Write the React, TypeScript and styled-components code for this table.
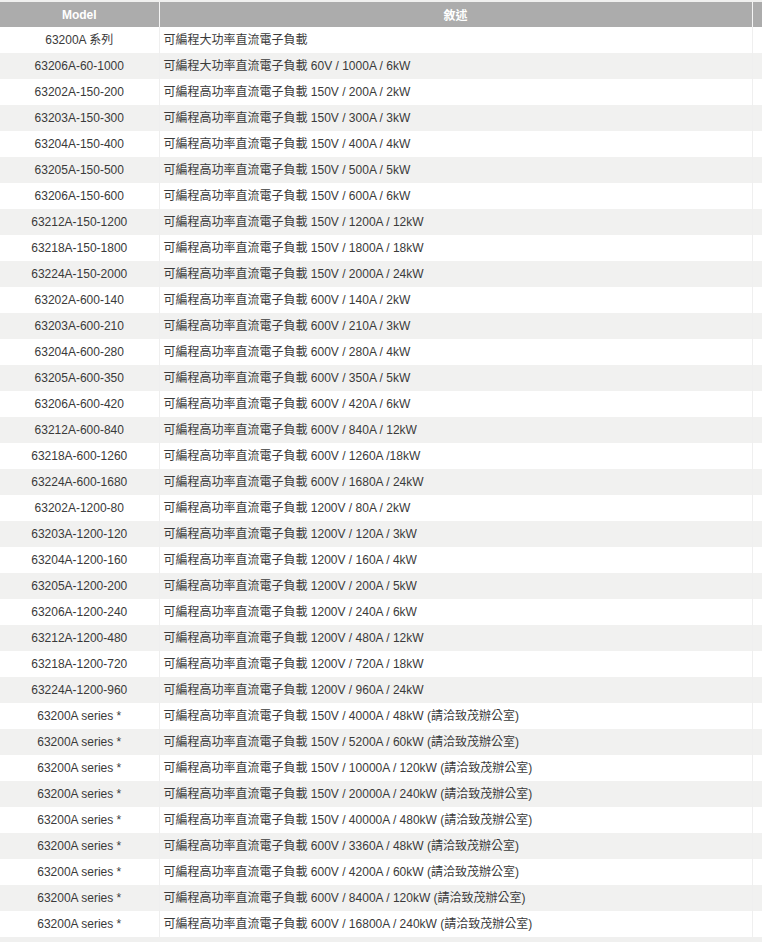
import React from 'react';
import styled, { createGlobalStyle } from 'styled-components';

const GlobalStyle = createGlobalStyle`
  html, body {
    margin: 0;
    padding: 0;
    background: #ffffff;
  }
  body {
    font-family: "Liberation Sans", Arial, "Noto Sans CJK TC", sans-serif;
    font-size: 12px;
    color: #3a3a3a;
  }
`;

interface IRow {
  model: string;
  desc: string;
}

const NOTE = ' (請洽致茂辦公室)';

const range = (
  volt: string,
  items: [string, string, string][],
  family = '高'
): IRow[] =>
  items.map(([model, amp, kw]) => ({
    model,
    desc: `可編程${family}功率直流電子負載 ${volt} / ${amp}${kw}`,
  }));

const rows: IRow[] = [
  { model: '63200A 系列', desc: '可編程大功率直流電子負載' },
  { model: '63206A-60-1000', desc: '可編程大功率直流電子負載 60V / 1000A / 6kW' },
  ...range('150V', [
    ['63202A-150-200', '200A', ' / 2kW'],
    ['63203A-150-300', '300A', ' / 3kW'],
    ['63204A-150-400', '400A', ' / 4kW'],
    ['63205A-150-500', '500A', ' / 5kW'],
    ['63206A-150-600', '600A', ' / 6kW'],
    ['63212A-150-1200', '1200A', ' / 12kW'],
    ['63218A-150-1800', '1800A', ' / 18kW'],
    ['63224A-150-2000', '2000A', ' / 24kW'],
  ]),
  ...range('600V', [
    ['63202A-600-140', '140A', ' / 2kW'],
    ['63203A-600-210', '210A', ' / 3kW'],
    ['63204A-600-280', '280A', ' / 4kW'],
    ['63205A-600-350', '350A', ' / 5kW'],
    ['63206A-600-420', '420A', ' / 6kW'],
    ['63212A-600-840', '840A', ' / 12kW'],
    ['63218A-600-1260', '1260A', ' /18kW'],
    ['63224A-600-1680', '1680A', ' / 24kW'],
  ]),
  ...range('1200V', [
    ['63202A-1200-80', '80A', ' / 2kW'],
    ['63203A-1200-120', '120A', ' / 3kW'],
    ['63204A-1200-160', '160A', ' / 4kW'],
    ['63205A-1200-200', '200A', ' / 5kW'],
    ['63206A-1200-240', '240A', ' / 6kW'],
    ['63212A-1200-480', '480A', ' / 12kW'],
    ['63218A-1200-720', '720A', ' / 18kW'],
    ['63224A-1200-960', '960A', ' / 24kW'],
  ]),
  ...[
    ['150V', '4000A', '48kW'],
    ['150V', '5200A', '60kW'],
    ['150V', '10000A', '120kW'],
    ['150V', '20000A', '240kW'],
    ['150V', '40000A', '480kW'],
    ['600V', '3360A', '48kW'],
    ['600V', '4200A', '60kW'],
    ['600V', '8400A', '120kW'],
    ['600V', '16800A', '240kW'],
  ].map(([v, a, k]) => ({
    model: '63200A series *',
    desc: `可編程高功率直流電子負載 ${v} / ${a} / ${k}${NOTE}`,
  })),
];

export default function App() {
  return (
    <>
      <GlobalStyle />
      <Wrapper>
        <Table>
          <colgroup>
            <col style={{ width: 159 }} />
            <col style={{ width: 593 }} />
            <col />
          </colgroup>
          <thead>
            <tr>
              <Th>Model</Th>
              <Th>敘述</Th>
              <Th $last />
            </tr>
          </thead>
          <tbody>
            {rows.map((row, i) => (
              <Tr key={i} $even={i % 2 === 1}>
                <ModelCell>{row.model}</ModelCell>
                <DescCell>{row.desc}</DescCell>
                <EmptyCell />
              </Tr>
            ))}
          </tbody>
        </Table>
      </Wrapper>
    </>
  );
}

const Wrapper = styled.div`
  width: 762px;
  overflow: hidden;
  background: #f0f0ef;
  padding: 2px 0 6px;
`;

const Table = styled.table`
  width: 762px;
  border-collapse: collapse;
  table-layout: fixed;
`;

const Th = styled.th<{ $last?: boolean }>`
  height: 25px;
  padding: 0;
  background: #acacac;
  color: #ffffff;
  font-weight: bold;
  font-size: 12px;
  text-align: center;
  border-right: ${({ $last }) => ($last ? 'none' : '1px solid #f4f4f4')};
  font-family: "Liberation Sans", Arial, "Noto Sans CJK TC", sans-serif;
`;

const Tr = styled.tr<{ $even: boolean }>`
  height: 26px;
  background: ${({ $even }) => ($even ? '#f1f1f0' : '#ffffff')};
`;

const Cell = styled.td`
  padding: 0 4px;
  white-space: nowrap;
  border-right: 1px solid #efefef;
  font-size: 12px;
  line-height: 14px;
`;

const ModelCell = styled(Cell)`
  text-align: center;
`;

const DescCell = styled(Cell)`
  text-align: left;
`;

const EmptyCell = styled.td`
  padding: 0;
`;
